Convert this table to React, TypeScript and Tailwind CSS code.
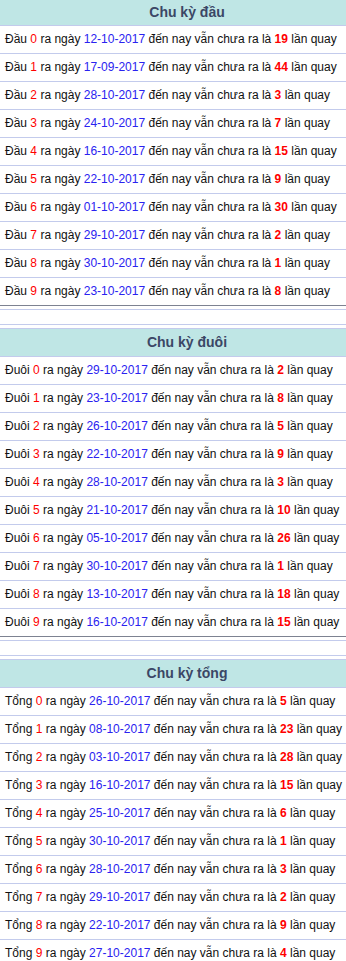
const sections = [
  {
    title: 'Chu kỳ đầu',
    label: 'Đầu',
    rows: [
      ['12-10-2017', 19],
      ['17-09-2017', 44],
      ['28-10-2017', 3],
      ['24-10-2017', 7],
      ['16-10-2017', 15],
      ['22-10-2017', 9],
      ['01-10-2017', 30],
      ['29-10-2017', 2],
      ['30-10-2017', 1],
      ['23-10-2017', 8],
    ],
  },
  {
    title: 'Chu kỳ đuôi',
    label: 'Đuôi',
    rows: [
      ['29-10-2017', 2],
      ['23-10-2017', 8],
      ['26-10-2017', 5],
      ['22-10-2017', 9],
      ['28-10-2017', 3],
      ['21-10-2017', 10],
      ['05-10-2017', 26],
      ['30-10-2017', 1],
      ['13-10-2017', 18],
      ['16-10-2017', 15],
    ],
  },
  {
    title: 'Chu kỳ tổng',
    label: 'Tổng',
    rows: [
      ['26-10-2017', 5],
      ['08-10-2017', 23],
      ['03-10-2017', 28],
      ['16-10-2017', 15],
      ['25-10-2017', 6],
      ['30-10-2017', 1],
      ['28-10-2017', 3],
      ['29-10-2017', 2],
      ['22-10-2017', 9],
      ['27-10-2017', 4],
    ],
  },
] as const

function Section({ s, first }: { s: (typeof sections)[number]; first: boolean }) {
  return (
    <div>
      <div
        className={`bg-[#bfe6e5] text-[14px] font-bold text-[#3b4766] text-center pl-[28px] border-b border-[#c3cbec] ${
          first ? 'h-[26px] leading-[25px]' : 'h-[29px] leading-[27px] border-t border-[#7d8291]'
        }`}
      >
        {s.title}
      </div>
      {s.rows.map(([date, count], i) => (
        <div
          key={i}
          className={`h-[28px] leading-[27px] pl-[5px] whitespace-nowrap text-[12px] text-[#111] border-b ${
            i === s.rows.length - 1 ? 'border-[#7d8291]' : 'border-[#c3cbec]'
          }`}
        >
          {s.label} <span className="text-[#ff0000]">{i}</span> ra ngày{' '}
          <span className="text-[#2a22f0]">{date}</span> đến nay vẫn chưa ra là{' '}
          <span className="text-[#ff0000] font-bold">{count}</span> lần quay
        </div>
      ))}
    </div>
  )
}

export default function App() {
  return (
    <div className="w-[346px] overflow-hidden bg-white font-['Liberation_Sans',Arial,sans-serif]">
      {sections.map((s, idx) => (
        <div key={idx}>
          <Section s={s} first={idx === 0} />
          {idx < sections.length - 1 && (
            <div className="pt-[3px]">
              <div className="h-[15px] border-t border-[#c3cbec]" />
              <div className="h-[4px] border-t border-[#c3cbec]" />
            </div>
          )}
        </div>
      ))}
    </div>
  )
}
